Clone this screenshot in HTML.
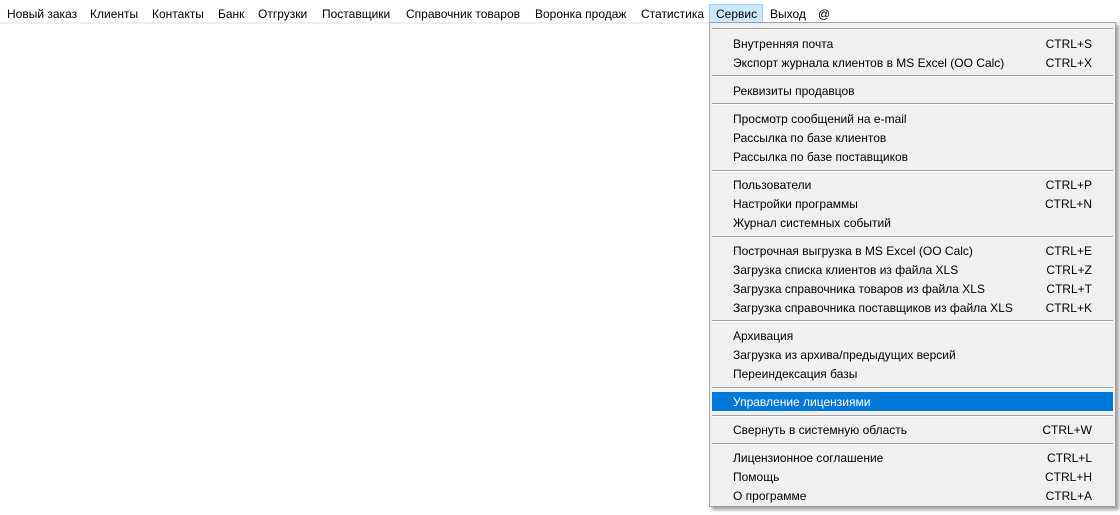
<!DOCTYPE html>
<html><head><meta charset="utf-8"><style>
html,body{margin:0;padding:0;width:1120px;height:515px;background:#fff;overflow:hidden;font-family:"Liberation Sans",sans-serif;font-size:12px;color:#000}
.t{position:absolute;white-space:nowrap;line-height:14px}
.bar{position:absolute;left:0;top:22px;width:1120px;height:2px;background:#f0f0f0}
.sel{position:absolute;left:709px;top:4px;width:52px;height:17px;background:#cce8ff;border:1px solid #99d1ff}
.menu{position:absolute;left:709px;top:22px;width:405px;height:483px;background:#f0f0f0;border:1px solid #a0a0a0;box-shadow:3px 3px 3px rgba(0,0,0,0.35)}
.sep{position:absolute;left:712px;width:401px;height:1px;background:#a0a0a0;border-bottom:1px solid #fff}
.hl{position:absolute;left:712px;top:392px;width:401px;height:19px;background:#0078d7}
.k{position:absolute;right:28px;white-space:nowrap;line-height:14px;text-align:right}
.m .t,.m .k{margin-top:1px}
</style></head><body>
<div class="bar"></div>
<div class="sel"></div>
<div class="t" style="left:7px;top:7px">Новый заказ</div>
<div class="t" style="left:90px;top:7px">Клиенты</div>
<div class="t" style="left:152px;top:7px">Контакты</div>
<div class="t" style="left:218px;top:7px">Банк</div>
<div class="t" style="left:258px;top:7px">Отгрузки</div>
<div class="t" style="left:322px;top:7px">Поставщики</div>
<div class="t" style="left:406px;top:7px">Справочник товаров</div>
<div class="t" style="left:535px;top:7px">Воронка продаж</div>
<div class="t" style="left:641px;top:7px">Статистика</div>
<div class="t" style="left:716px;top:7px">Сервис</div>
<div class="t" style="left:770px;top:7px">Выход</div>
<div class="t" style="left:818px;top:7px">@</div>
<div class="menu"></div>
<div class="sep" style="top:28px"></div>
<div class="sep" style="top:75px"></div>
<div class="sep" style="top:103px"></div>
<div class="sep" style="top:170px"></div>
<div class="sep" style="top:236px"></div>
<div class="sep" style="top:320px"></div>
<div class="sep" style="top:387px"></div>
<div class="sep" style="top:415px"></div>
<div class="sep" style="top:443px"></div>
<div class="hl"></div>
<div class="m">
<div class="t" style="left:733px;top:36px">Внутренняя почта</div><div class="k" style="top:36px">CTRL+S</div>
<div class="t" style="left:733px;top:55px">Экспорт журнала клиентов в MS Excel (OO Calc)</div><div class="k" style="top:55px">CTRL+X</div>
<div class="t" style="left:733px;top:83px">Реквизиты продавцов</div>
<div class="t" style="left:733px;top:111px">Просмотр сообщений на e-mail</div>
<div class="t" style="left:733px;top:130px">Рассылка по базе клиентов</div>
<div class="t" style="left:733px;top:149px">Рассылка по базе поставщиков</div>
<div class="t" style="left:733px;top:177px">Пользователи</div><div class="k" style="top:177px">CTRL+P</div>
<div class="t" style="left:733px;top:196px">Настройки программы</div><div class="k" style="top:196px">CTRL+N</div>
<div class="t" style="left:733px;top:215px">Журнал системных событий</div>
<div class="t" style="left:733px;top:243px">Построчная выгрузка в MS Excel (OO Calc)</div><div class="k" style="top:243px">CTRL+E</div>
<div class="t" style="left:733px;top:262px">Загрузка списка клиентов из файла XLS</div><div class="k" style="top:262px">CTRL+Z</div>
<div class="t" style="left:733px;top:281px">Загрузка справочника товаров из файла XLS</div><div class="k" style="top:281px">CTRL+T</div>
<div class="t" style="left:733px;top:300px">Загрузка справочника поставщиков из файла XLS</div><div class="k" style="top:300px">CTRL+K</div>
<div class="t" style="left:733px;top:328px">Архивация</div>
<div class="t" style="left:733px;top:347px">Загрузка из архива/предыдущих версий</div>
<div class="t" style="left:733px;top:366px">Переиндексация базы</div>
<div class="t" style="left:733px;top:394px;color:#fff">Управление лицензиями</div>
<div class="t" style="left:733px;top:422px">Свернуть в системную область</div><div class="k" style="top:422px">CTRL+W</div>
<div class="t" style="left:733px;top:450px">Лицензионное соглашение</div><div class="k" style="top:450px">CTRL+L</div>
<div class="t" style="left:733px;top:469px">Помощь</div><div class="k" style="top:469px">CTRL+H</div>
<div class="t" style="left:733px;top:488px">О программе</div><div class="k" style="top:488px">CTRL+A</div>
</div>
</body></html>
